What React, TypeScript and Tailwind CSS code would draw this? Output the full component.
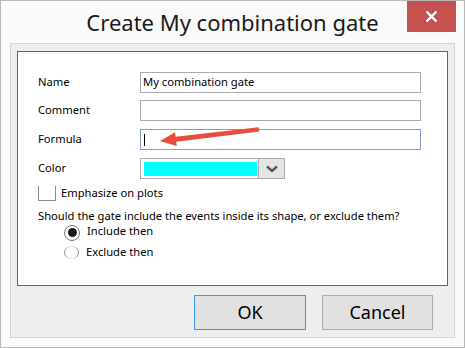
import React from 'react';

const font = { fontFamily: '"Noto Sans", "Open Sans", sans-serif' };

function TextBox({ value, focused, children }: { value?: string; focused?: boolean; children?: React.ReactNode }) {
  return (
    <div
      className={`h-[21px] w-[281px] border bg-white pl-[2px] flex items-center text-[11.2px] text-black ${
        focused ? 'border-[#7f9fc8]' : 'border-[#ababab]'
      }`}
    >
      {value}
      {children}
    </div>
  );
}

function Row({ label, children, className }: { label: string; children: React.ReactNode; className?: string }) {
  return (
    <div className={`flex items-center ${className ?? ''}`}>
      <span className="w-[102px] text-[11.2px] text-black">{label}</span>
      {children}
    </div>
  );
}

export default function App() {
  return (
    <div style={font} className="w-[465px] h-[348px] border border-[#b9b9b9] bg-[#fafafa] flex flex-col overflow-hidden">
      {/* title bar */}
      <div className="h-[42px] grid grid-cols-[1fr_auto_1fr] items-start shrink-0">
        <div />
        <div className="pt-[6px] text-[22px] leading-[30px] text-[#1a1a1a]">Create My combination gate</div>
        <div className="flex justify-end">
          <button className="-mt-[1px] mr-[8px] w-[49px] h-[32px] bg-[#c75050] flex items-center justify-center">
            <svg width="13" height="13" viewBox="0 0 13 13">
              <path d="M1.5 1.5 L11.5 11.5 M11.5 1.5 L1.5 11.5" stroke="#fff" strokeWidth="2.4" />
            </svg>
          </button>
        </div>
      </div>

      {/* body panel */}
      <div className="ml-[9px] w-[445px] h-[295px] border border-[#d4d4d4] bg-[#eeeeee] flex flex-col px-[6px] pt-[7px] shrink-0">
        <div className="relative h-[235px] border border-[#646464] bg-white pl-[20px] pt-[20px] flex flex-col">
          <Row label="Name">
            <TextBox value="My combination gate" />
          </Row>
          <Row label="Comment" className="mt-[7px]">
            <TextBox />
          </Row>
          <Row label="Formula" className="mt-[8px]">
            <TextBox focused>
              <span className="w-px h-[12px] bg-black ml-[1px]" />
            </TextBox>
          </Row>
          <Row label="Color" className="mt-[8px]">
            <div className="h-[21px] w-[145px] border border-[#ababab] bg-white flex">
              <div className="ml-[3px] mt-[3px] w-[113px] h-[14px] bg-[#00ffff]" />
              <div className="ml-[1px] flex-1 border-l border-[#ababab] bg-[#e5e5e5] flex items-center justify-center">
                <svg width="12" height="8" viewBox="0 0 12 8">
                  <path d="M1 1.5 L6 6 L11 1.5" stroke="#555" strokeWidth="2.4" fill="none" />
                </svg>
              </div>
            </div>
          </Row>

          <div className="mt-[6px] flex items-center">
            <span className="w-[18px] h-[15px] border-l border-r border-b border-[#8a8a8a]" />
            <span className="ml-[5px] text-[11.2px] text-black">Emphasize on plots</span>
          </div>

          <div className="mt-[6px] text-[11.2px] leading-[16px] text-black">
            Should the gate include the events inside its shape, or exclude them?
          </div>

          <div className="ml-[26px] mt-[1px] flex items-center">
            <span className="w-[16px] h-[16px] rounded-full border border-[#7a7a7a] flex items-center justify-center">
              <span className="w-[9px] h-[9px] rounded-full bg-[#1a1a1a]" />
            </span>
            <span className="ml-[7px] -mt-[3px] text-[11.2px] text-black">Include then</span>
          </div>
          <div className="ml-[26px] mt-[3px] flex items-center">
            <span className="w-[15px] h-[13px] rounded-[50%] border-l border-r border-[#8a8a8a]" />
            <span className="ml-[7px] text-[11.2px] text-black">Exclude then</span>
          </div>

          {/* annotation arrow */}
          <svg className="absolute left-0 top-0" width="428" height="233" viewBox="0 0 428 233">
            <polygon
              points="240.6,75.2 241.2,79.6 158.3,89.7 158.7,94 142,89 157,80.2 157.6,84.8"
              fill="#e84c3d"
            />
          </svg>
        </div>

        <div className="mt-[9px] pr-[15px] flex justify-end gap-[16px]">
          <button className="w-[112px] h-[35px] border border-[#3399ff] bg-[#e1e1e1] text-[18px] text-black">OK</button>
          <button className="w-[111px] h-[35px] border border-[#adadad] bg-[#e1e1e1] text-[18px] text-black">Cancel</button>
        </div>
      </div>
    </div>
  );
}
